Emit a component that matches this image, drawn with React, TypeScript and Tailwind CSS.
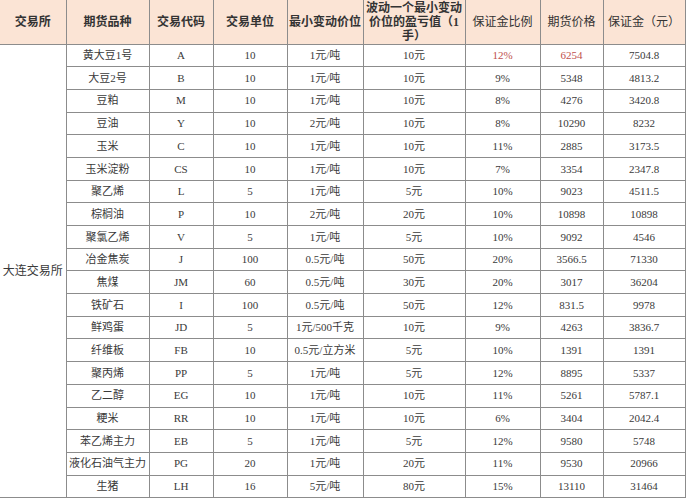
import React from "react";

type Row = [string, string, string, string, string, string, string, string];

const rows: Row[] = [
  ["黄大豆1号", "A", "10", "1元/吨", "10元", "12%", "6254", "7504.8"],
  ["大豆2号", "B", "10", "1元/吨", "10元", "9%", "5348", "4813.2"],
  ["豆粕", "M", "10", "1元/吨", "10元", "8%", "4276", "3420.8"],
  ["豆油", "Y", "10", "2元/吨", "10元", "8%", "10290", "8232"],
  ["玉米", "C", "10", "1元/吨", "10元", "11%", "2885", "3173.5"],
  ["玉米淀粉", "CS", "10", "1元/吨", "10元", "7%", "3354", "2347.8"],
  ["聚乙烯", "L", "5", "1元/吨", "5元", "10%", "9023", "4511.5"],
  ["棕榈油", "P", "10", "2元/吨", "20元", "10%", "10898", "10898"],
  ["聚氯乙烯", "V", "5", "1元/吨", "5元", "10%", "9092", "4546"],
  ["冶金焦炭", "J", "100", "0.5元/吨", "50元", "20%", "3566.5", "71330"],
  ["焦煤", "JM", "60", "0.5元/吨", "30元", "20%", "3017", "36204"],
  ["铁矿石", "I", "100", "0.5元/吨", "50元", "12%", "831.5", "9978"],
  ["鲜鸡蛋", "JD", "5", "1元/500千克", "10元", "9%", "4263", "3836.7"],
  ["纤维板", "FB", "10", "0.5元/立方米", "5元", "10%", "1391", "1391"],
  ["聚丙烯", "PP", "5", "1元/吨", "5元", "12%", "8895", "5337"],
  ["乙二醇", "EG", "10", "1元/吨", "10元", "11%", "5261", "5787.1"],
  ["粳米", "RR", "10", "1元/吨", "10元", "6%", "3404", "2042.4"],
  ["苯乙烯主力", "EB", "5", "1元/吨", "5元", "12%", "9580", "5748"],
  ["液化石油气主力", "PG", "20", "1元/吨", "20元", "11%", "9530", "20966"],
  ["生猪", "LH", "16", "5元/吨", "80元", "15%", "13110", "31464"],
];

const font = { fontFamily: '"Liberation Serif", "Noto Sans CJK SC", serif' };

export default function App() {
  return (
    <div className="w-[686px] h-[500px] bg-white overflow-hidden" style={font}>
      <table className="w-[685px] table-fixed border-collapse text-[11px] text-[#3a3a3a]">
        <colgroup>
          <col className="w-[66px]" />
          <col className="w-[83px]" />
          <col className="w-[64px]" />
          <col className="w-[74px]" />
          <col className="w-[76px]" />
          <col className="w-[102px]" />
          <col className="w-[75px]" />
          <col className="w-[63px]" />
          <col className="w-[82px]" />
        </colgroup>
        <thead>
          <tr className="h-[44px] bg-[#fbe4d5] text-[12px] text-[#333]">
            <th className="font-bold border-b border-r border-[#8c8c8c]">交易所</th>
            <th className="font-bold border border-t-0 border-[#8c8c8c]">期货品种</th>
            <th className="font-bold border border-t-0 border-[#8c8c8c]">交易代码</th>
            <th className="font-bold border border-t-0 border-[#8c8c8c]">交易单位</th>
            <th className="font-bold border border-t-0 border-[#8c8c8c] whitespace-nowrap">最小变动价位</th>
            <th className="font-bold border border-t-0 border-[#8c8c8c] leading-[14px] p-0 whitespace-nowrap">
              波动一个最小变动
              <br />
              价位的盈亏值（1
              <br />
              手）
            </th>
            <th className="font-normal border border-t-0 border-[#8c8c8c]">保证金比例</th>
            <th className="font-normal border border-t-0 border-[#8c8c8c]">期货价格</th>
            <th className="font-normal border border-t-0 border-[#8c8c8c]">保证金（元）</th>
          </tr>
        </thead>
        <tbody>
          {rows.map((r, i) => (
            <tr key={r[0]} className="h-[22.7px] text-center">
              {i === 0 && (
                <td rowSpan={rows.length} className="border-b border-r border-[#8c8c8c] text-[12px] align-middle">
                  大连交易所
                </td>
              )}
              {r.map((c, j) => (
                <td
                  key={j}
                  className={
                    "border border-[#8c8c8c] whitespace-nowrap p-0 " +
                    (i === 0 && (j === 5 || j === 6) ? "text-[#c0504d]" : "")
                  }
                >
                  {c}
                </td>
              ))}
            </tr>
          ))}
        </tbody>
      </table>
    </div>
  );
}
